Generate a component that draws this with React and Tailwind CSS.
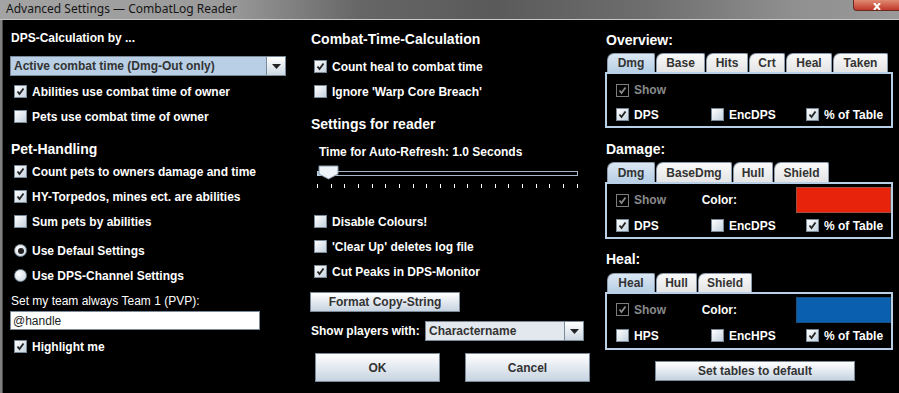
import { useState } from "react";

const font = { fontFamily: '"Liberation Sans", Arial, sans-serif' };

function Check({ checked, disabled }) {
  return (
    <span
      className={
        "inline-flex w-[13px] h-[13px] shrink-0 items-center justify-center border " +
        (disabled
          ? "border-[#7d7d7d] bg-black"
          : "border-[#7a8a99] bg-[linear-gradient(135deg,#ffffff,#c5d2df)]")
      }
    >
      {checked && (
        <svg width="9" height="9" viewBox="0 0 9 9">
          <path
            d="M1.5 4.5 L3.5 7 L7.5 1.5"
            fill="none"
            stroke={disabled ? "#8a8a8a" : "#222"}
            strokeWidth="1.8"
          />
        </svg>
      )}
    </span>
  );
}

function CheckRow({ label, checked, disabled, className = "" }) {
  return (
    <div className={"flex items-center h-[25px] pl-[4px] gap-[5px] " + className}>
      <Check checked={checked} disabled={disabled} />
      <span className={"text-[12px] font-bold " + (disabled ? "text-[#8a8a8a]" : "text-white")}>
        {label}
      </span>
    </div>
  );
}

function Radio({ label, selected }) {
  return (
    <div className="flex items-center h-[25px] pl-[4px] gap-[5px]">
      <span className="w-[13px] h-[13px] rounded-full border border-[#7a8a99] bg-[radial-gradient(circle_at_35%_35%,#ffffff,#c5d2df)] flex items-center justify-center">
        {selected && <span className="w-[6px] h-[6px] rounded-full bg-[#222]" />}
      </span>
      <span className="text-[12px] font-bold text-white">{label}</span>
    </div>
  );
}

function Combo({ value, className = "", highlight }) {
  return (
    <div className={"flex border border-[#7a8a99] " + className}>
      <div
        className={
          "flex-1 flex items-center pl-[3px] text-[12px] font-bold text-[#333] " +
          (highlight ? "bg-[#b8cfe5]" : "bg-[#e3e8ee]")
        }
      >
        {value}
      </div>
      <div className="w-[19px] border-l border-[#7a8a99] bg-[linear-gradient(#ffffff,#cdd8e3)] flex items-center justify-center">
        <svg width="9" height="5" viewBox="0 0 9 5">
          <path d="M0 0 H9 L4.5 5 Z" fill="#222" />
        </svg>
      </div>
    </div>
  );
}

function Button({ children, className = "" }) {
  return (
    <button
      className={
        "border border-[#7a8a99] bg-[linear-gradient(#ffffff,#c6d3e0)] text-[12px] font-bold text-[#333] flex items-center justify-center " +
        className
      }
    >
      {children}
    </button>
  );
}

function Tabs({ tabs, className = "" }) {
  return (
    <div className={"flex items-end pl-[2px] gap-[1px] " + className}>
      {tabs.map((t, i) => (
        <div
          key={t.label}
          style={{ width: t.w }}
          className={
            "h-full flex items-center justify-center border border-b-0 border-[#8c9cae] rounded-tl-[7px] rounded-tr-[2px] text-[12px] font-bold text-[#333] " +
            (i === 0 ? "bg-[linear-gradient(#dbe7f3,#b8cfe5)]" : "bg-[linear-gradient(#fafafa,#e4e4e4)]")
          }
        >
          {t.label}
        </div>
      ))}
    </div>
  );
}

function Panel({ children, className = "" }) {
  return (
    <div className={"w-[288px] border-2 border-[#b8cfe5] pl-[5px] flex flex-col " + className}>
      {children}
    </div>
  );
}

function Slider() {
  const ticks = Array.from({ length: 20 });
  return (
    <div className="relative ml-[7px] w-[261px] h-[28px]">
      <div className="absolute left-0 top-[9px] w-[261px] h-[5px] border border-[#a8b8c8] bg-black" />
      <div className="absolute left-0 top-[9px] w-[12px] h-[5px] bg-[#b8cfe5]" />
      <svg className="absolute left-[1px] top-[3px]" width="22" height="15" viewBox="0 0 22 15">
        <path d="M1 1 H20 V9 L10.5 14 L1 9 Z" fill="#eef3f8" stroke="#8a9aab" />
      </svg>
      <div className="absolute left-0 top-[22px] w-[261px] flex justify-between">
        {ticks.map((_, i) => (
          <span key={i} className="w-[1px] h-[4px] bg-white" />
        ))}
      </div>
    </div>
  );
}

export default function App() {
  const [name, setName] = useState("@handle");

  return (
    <div className="w-[899px] h-[393px] bg-black overflow-hidden flex flex-col" style={font}>
      <div className="h-[19px] shrink-0 flex items-start justify-between bg-[linear-gradient(90deg,#a3a3a3_0%,#9b9b9b_25%,#666_40%,#5a5a5a_55%,#6e6e6e_72%,#8f8f8f_88%,#9a9a9a_100%)]">
        <span
          className="pl-[6px] pt-[1px] text-[12px] text-[#151515] leading-[16px]"
          style={{ fontFamily: '"Noto Sans", "Open Sans", sans-serif' }}
        >
          Advanced Settings — CombatLog Reader
        </span>
        <div className="w-[46px] h-[11px] rounded-bl-[4px] border border-t-0 border-r-0 border-[#6b2a20] bg-[linear-gradient(#e08a72,#c0392b)] flex items-end justify-center">
          <svg width="10" height="7" viewBox="0 0 10 7">
            <path d="M2 0 L8 7 M8 0 L2 7" stroke="white" strokeWidth="2" />
          </svg>
        </div>
      </div>
      <div className="h-[1px] shrink-0 bg-[#c9c9c9]" />

      <div className="flex flex-1">
        <div className="w-[3px] shrink-0 bg-[#7f7f7f] border-r border-[#4a4a4a]" />

        {/* left column */}
        <div className="w-[300px] shrink-0 pl-[7px] flex flex-col">
          <div className="h-[20px] mt-[8px] flex items-center text-[12px] font-bold text-white pl-[1px]">
            DPS-Calculation by ...
          </div>
          <Combo value="Active combat time (Dmg-Out only)" highlight className="w-[276px] h-[20px] mt-[8px]" />
          <CheckRow label="Abilities use combat time of owner" checked className="mt-[3px]" />
          <CheckRow label="Pets use combat time of owner" />
          <div className="h-[20px] mt-[10px] flex items-center text-[14px] font-bold text-white pl-[1px]">
            Pet-Handling
          </div>
          <CheckRow label="Count pets to owners damage and time" checked />
          <CheckRow label="HY-Torpedos, mines ect. are abilities" checked />
          <CheckRow label="Sum pets by abilities" />
          <div className="mt-[4px]">
            <Radio label="Use Defaul Settings" selected />
            <Radio label="Use DPS-Channel Settings" />
          </div>
          <div className="h-[20px] mt-[3px] flex items-center text-[12px] text-white pl-[1px]">
            Set my team always Team 1 (PVP):
          </div>
          <input
            value={name}
            onChange={(e) => setName(e.target.value)}
            className="w-[250px] h-[19px] bg-white border border-[#7a8a99] px-[2px] text-[12px] text-[#222] outline-none"
          />
          <CheckRow label="Highlight me" checked className="mt-[4px]" />
        </div>

        {/* middle column */}
        <div className="w-[297px] shrink-0 pl-[7px] flex flex-col">
          <div className="h-[20px] mt-[9px] flex items-center text-[14px] font-bold text-white pl-[1px]">
            Combat-Time-Calculation
          </div>
          <CheckRow label="Count heal to combat time" checked className="mt-[5px]" />
          <CheckRow label="Ignore 'Warp Core Breach'" />
          <div className="h-[20px] mt-[10px] flex items-center text-[14px] font-bold text-white pl-[1px]">
            Settings for reader
          </div>
          <div className="h-[20px] mt-[8px] flex items-center text-[12px] font-bold text-white pl-[9px]">
            Time for Auto-Refresh: 1.0 Seconds
          </div>
          <Slider />
          <div className="mt-[19px] flex flex-col">
            <CheckRow label="Disable Colours!" className="h-[24px]" />
            <CheckRow label="'Clear Up' deletes log file" className="h-[24px]" />
            <CheckRow label="Cut Peaks in DPS-Monitor" checked className="h-[24px]" />
          </div>
          <Button className="w-[150px] h-[20px] mt-[8px]">Format Copy-String</Button>
          <div className="h-[20px] mt-[9px] flex items-center">
            <span className="w-[115px] pl-[1px] text-[12px] font-bold text-white">Show players with:</span>
            <Combo value="Charactername" className="w-[159px] h-[20px]" />
          </div>
          <div className="mt-[12px] pl-[5px] flex gap-[25px]">
            <Button className="w-[125px] h-[29px]">OK</Button>
            <Button className="w-[125px] h-[29px]">Cancel</Button>
          </div>
        </div>

        {/* right column */}
        <div className="flex-1 pl-[5px] flex flex-col">
          <div className="h-[20px] mt-[10px] flex items-center text-[14px] font-bold text-white pl-[1px]">
            Overview:
          </div>
          <Tabs
            className="h-[19px] mt-[3px]"
            tabs={[
              { label: "Dmg", w: 48 },
              { label: "Base", w: 49 },
              { label: "Hits", w: 42 },
              { label: "Crt", w: 36 },
              { label: "Heal", w: 46 },
              { label: "Taken", w: 55 },
            ]}
          />
          <Panel className="h-[56px] pt-[4px]">
            <CheckRow label="Show" checked disabled className="h-[24px] pl-0" />
            <div className="flex h-[24px]">
              <CheckRow label="DPS" checked className="w-[95px] h-[24px] pl-0" />
              <CheckRow label="EncDPS" className="w-[95px] h-[24px] pl-0" />
              <CheckRow label="% of Table" checked className="h-[24px] pl-0" />
            </div>
          </Panel>

          <div className="h-[20px] mt-[11px] flex items-center text-[14px] font-bold text-white pl-[1px]">
            Damage:
          </div>
          <Tabs
            className="h-[20px] mt-[3px]"
            tabs={[
              { label: "Dmg", w: 48 },
              { label: "BaseDmg", w: 76 },
              { label: "Hull", w: 40 },
              { label: "Shield", w: 55 },
            ]}
          />
          <Panel className="h-[57px] pt-[3px]">
            <div className="flex h-[26px] items-center">
              <CheckRow label="Show" checked disabled className="w-[90px] h-[24px] pl-0" />
              <span className="w-[95px] text-[12px] font-bold text-white">Color:</span>
              <div className="w-[95px] h-[26px] bg-[#e8230c] border border-[#a05040]" />
            </div>
            <div className="flex h-[24px]">
              <CheckRow label="DPS" checked className="w-[95px] h-[24px] pl-0" />
              <CheckRow label="EncDPS" className="w-[95px] h-[24px] pl-0" />
              <CheckRow label="% of Table" checked className="h-[24px] pl-0" />
            </div>
          </Panel>

          <div className="h-[20px] mt-[10px] flex items-center text-[14px] font-bold text-white pl-[1px]">
            Heal:
          </div>
          <Tabs
            className="h-[19px] mt-[4px]"
            tabs={[
              { label: "Heal", w: 48 },
              { label: "Hull", w: 41 },
              { label: "Shield", w: 54 },
            ]}
          />
          <Panel className="h-[58px] pt-[2px]">
            <div className="flex h-[27px] items-center">
              <CheckRow label="Show" checked disabled className="w-[90px] h-[24px] pl-0" />
              <span className="w-[95px] text-[12px] font-bold text-white">Color:</span>
              <div className="w-[95px] h-[26px] bg-[#0a5fae] border border-[#1b4f80]" />
            </div>
            <div className="flex h-[24px]">
              <CheckRow label="HPS" className="w-[95px] h-[24px] pl-0" />
              <CheckRow label="EncHPS" className="w-[95px] h-[24px] pl-0" />
              <CheckRow label="% of Table" checked className="h-[24px] pl-0" />
            </div>
          </Panel>
          <Button className="w-[200px] h-[20px] mt-[11px] ml-[50px]">Set tables to default</Button>
        </div>
      </div>
    </div>
  );
}
